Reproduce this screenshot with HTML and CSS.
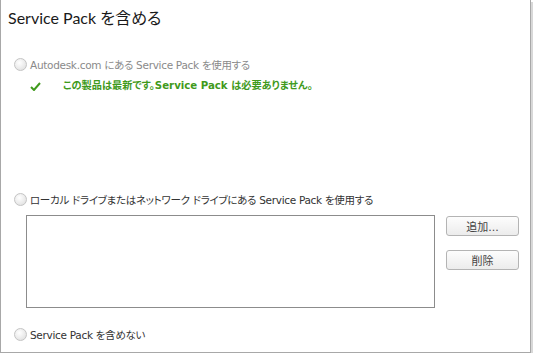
FILE: index.html
```html
<!DOCTYPE html>
<html lang="ja">
<head>
    <meta charset="UTF-8">
    <title>Service Pack を含める</title>
    <link rel="stylesheet" href="styles.css">
</head>
<body>
    <div class="panel">
        <h1 class="title">Service Pack を含める</h1>

        <label class="option disabled">
            <span class="radio"></span>
            <span>Autodesk.com にある Service Pack を使用する</span>
        </label>
        <div class="status">
            <svg class="check" width="11" height="9" viewBox="0 0 11 9">
                <path d="M1 5 L4 8 L10 1" fill="none" stroke="#3f9a1c" stroke-width="2"/>
            </svg>
            <span>この製品は最新です。Service Pack は必要ありません。</span>
        </div>

        <label class="option local">
            <span class="radio"></span>
            <span>ローカル ドライブまたはネットワーク ドライブにある Service Pack を使用する</span>
        </label>
        <div class="local-row">
            <div class="file-list"></div>
            <div class="buttons">
                <button>追加...</button>
                <button>削除</button>
            </div>
        </div>

        <label class="option none">
            <span class="radio"></span>
            <span>Service Pack を含めない</span>
        </label>
    </div>
</body>
</html>
```

FILE: styles.css
```css
body {
    margin: 0;
    background: #fff;
    font-family: "DejaVu Sans", Verdana, "Noto Sans CJK JP", sans-serif;
    font-size: 10.5px;
    color: #333;
    font-feature-settings: "palt";
}
.panel {
    width: 531px;
    height: 353px;
    border-left: 1px solid #a8a8a8;
    border-right: 1px solid #a8a8a8;
    border-bottom: 1px solid #a8a8a8;
    box-shadow: 2px 2px 0 #d8d8d8;
    box-sizing: border-box;
    padding: 7px 0 0 0;
}
.title {
    margin: 0 0 0 7px;
    font-family: Lato, "Noto Sans CJK JP", sans-serif;
    font-size: 16px;
    font-weight: normal;
    color: #1a1a1a;
    line-height: 22px;
}
.option {
    display: flex;
    align-items: center;
    gap: 3px;
    margin-left: 13px;
    height: 14px;
    letter-spacing: -0.3px;
}
.option.disabled {
    margin-top: 28px;
    color: #8a8a8a;
}
.option.local {
    margin-top: 102px;
}
.option.none {
    margin-top: 19px;
}
.radio {
    width: 11px;
    height: 11px;
    border-radius: 50%;
    border: 1px solid #c4c4c4;
    background: radial-gradient(circle at 40% 35%, #fff 0%, #e6e6e6 70%, #d6d6d6 100%);
}
.status {
    display: flex;
    align-items: center;
    margin: 7px 0 0 29px;
    height: 12px;
    color: #3f9a1c;
    font-weight: bold;
    font-size: 10.2px;
}
.check {
    margin-right: 22px;
    margin-top: 4px;
}
.local-row {
    display: flex;
    margin: 9px 0 0 25px;
    gap: 11px;
}
.file-list {
    width: 409px;
    height: 93px;
    border: 1px solid #8c8c8c;
    box-sizing: border-box;
}
.buttons {
    display: flex;
    flex-direction: column;
    gap: 14px;
    padding-top: 1px;
}
.buttons button {
    width: 73px;
    height: 20px;
    font-family: inherit;
    font-size: 11px;
    color: #444;
    border: 1px solid #b4b4b4;
    border-radius: 3px;
    background: linear-gradient(#fdfdfd, #ececec);
    padding: 0;
}
```
